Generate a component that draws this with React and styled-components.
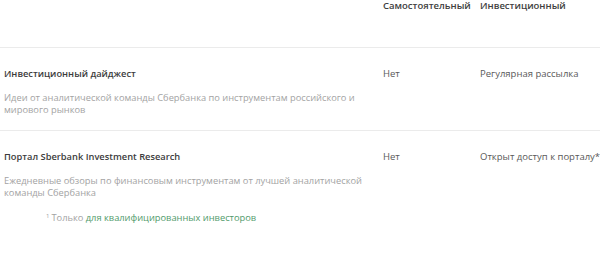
import styled, { createGlobalStyle } from "styled-components";

const GlobalStyle = createGlobalStyle`
	body {
		margin: 0;
		background: #fff;
		font-family: "Open Sans", "Liberation Sans", sans-serif;
		-webkit-font-smoothing: antialiased;
	}
`;

const Table = styled.div`
	width: 600px;
	height: 261px;
	overflow: hidden;
`;

const Row = styled.div`
	display: grid;
	grid-template-columns: 379px 97px 1fr;
	padding: ${(p) => p.$pad || "20px 0 14px 4px"};
	border-top: ${(p) => (p.$head ? "none" : "1px solid #ebebeb")};
	height: ${(p) => p.$height || "auto"};
	box-sizing: border-box;
`;

const HeadCell = styled.div`
	font-size: 9.5px;
	line-height: 12px;
	font-weight: 600;
	color: #404040;
	white-space: nowrap;
`;

const Title = styled.div`
	font-size: 9.3px;
	line-height: 12px;
	font-weight: 600;
	color: #3c3c3c;
`;

const Desc = styled.div`
	margin-top: 12px;
	font-size: 9.3px;
	line-height: 12px;
	color: #a3a3a3;
	max-width: 362px;
`;

const Value = styled.div`
	font-size: 9.5px;
	line-height: 12px;
	color: #595959;
	white-space: nowrap;
`;

const Note = styled.div`
	margin-top: 11px;
	padding-left: 42px;
	font-size: 9.3px;
	line-height: 12px;
	color: #a3a3a3;

	sup {
		font-size: 6px;
		vertical-align: 3px;
		margin-right: 2px;
	}

	a {
		color: #4f9a6a;
		text-decoration: none;
	}
`;

const products = [
	{
		title: "Инвестиционный дайджест",
		desc: "Идеи от аналитической команды Сбербанка по инструментам российского и мирового рынков",
		self: "Нет",
		invest: "Регулярная рассылка",
	},
	{
		title: "Портал Sberbank Investment Research",
		desc: "Ежедневные обзоры по финансовым инструментам от лучшей аналитической команды Сбербанка",
		self: "Нет",
		invest: "Открыт доступ к порталу*",
		note: true,
	},
];

export default function App() {
	return (
		<>
			<GlobalStyle />
			<Table>
				<Row $head $pad="0 0 0 4px" $height="47px">
					<div />
					<HeadCell>Самостоятельный</HeadCell>
					<HeadCell>Инвестиционный</HeadCell>
				</Row>
				{products.map((p) => (
					<Row key={p.title}>
						<div>
							<Title>{p.title}</Title>
							<Desc>{p.desc}</Desc>
							{p.note && (
								<Note>
									<sup>1</sup>Только <a href="#">для квалифицированных инвесторов</a>
								</Note>
							)}
						</div>
						<Value>{p.self}</Value>
						<Value>{p.invest}</Value>
					</Row>
				))}
			</Table>
		</>
	);
}
